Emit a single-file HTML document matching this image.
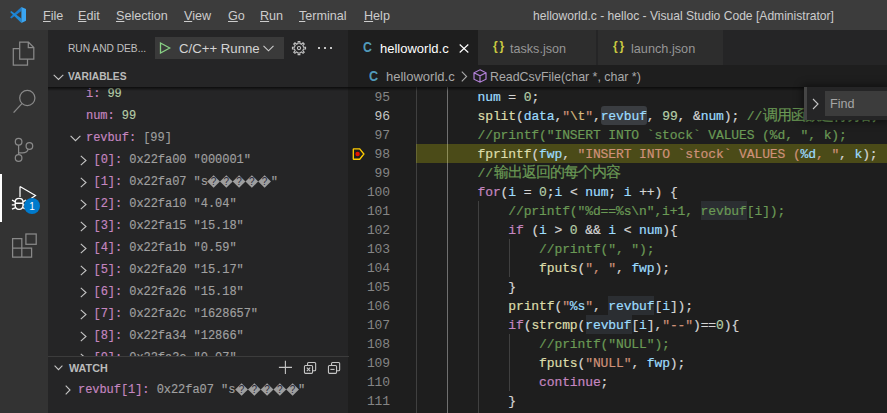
<!DOCTYPE html>
<html><head><meta charset="utf-8">
<style>
*{box-sizing:border-box}
html,body{margin:0;padding:0}
body{width:887px;height:413px;overflow:hidden;position:relative;background:#1e1e1e;font-family:"Liberation Sans",sans-serif;color:#ccc}
.a{position:absolute;white-space:pre}
#title{left:0;top:0;width:887px;height:30px;background:#3c3c3c}
#title .m{top:8px;font-size:12.6px;color:#cccccc;line-height:16px}
#title .m u{text-decoration:underline;text-underline-offset:1px}
#act{left:0;top:30px;width:48px;height:383px;background:#333333}
#side{left:48px;top:30px;width:300px;height:383px;background:#252526}
#tabs{left:349px;top:30px;width:538px;height:35px;background:#252526}
.tab{top:0;height:35px;background:#2d2d2d;font-size:13px;line-height:35px;color:#969696}
.mono{font-family:"Liberation Mono",monospace}
#code .l{position:absolute;left:67px;margin-top:1px;-webkit-text-stroke:0.2px currentColor;height:19px;line-height:19px;font-size:13px;letter-spacing:-0.11px;font-family:"Liberation Mono",monospace;color:#d4d4d4;white-space:pre}
.ln{position:absolute;width:41px;margin-top:1px;text-align:right;font-family:"Liberation Mono",monospace;font-size:13px;letter-spacing:-0.11px;color:#858585;height:19px;line-height:19px}
.v{color:#9cdcfe}.f{color:#dcdcaa}.s{color:#ce9178}.e{color:#d7ba7d}.c{color:#6a9955}.k{color:#c586c0}.n{color:#b5cea8}
.var{position:absolute;font-family:"Liberation Mono",monospace;font-size:12px;letter-spacing:-0.05px;line-height:22px;height:22px;white-space:pre;color:#a0a0a0;-webkit-text-stroke:0.15px currentColor}
.nm{color:#c586c0}
.cjk{font-size:14.5px;letter-spacing:-0.95px;margin-left:0.8px}.gv{color:#9d9d9d}
.chev{position:absolute}
</style></head><body>

<!-- TITLE BAR -->
<div id="title" class="a">
  <svg class="a" style="left:10px;top:7px" width="16" height="16" viewBox="0 0 16 16">
    <path d="M11.4 0 L11.4 4.1 L1.3 11.4 L0.1 10.3 Z" fill="#1b7ccc"/>
    <path d="M0.1 5 L1.3 3.9 L11.4 11.5 L11.4 15.9 Z" fill="#1f8ad8"/>
    <path d="M11.4 0 L16 2 L16 13.8 L11.4 15.9 Z" fill="#3aa5f2"/>
  </svg>
  <div class="a m" style="left:43px"><u>F</u>ile</div>
  <div class="a m" style="left:78px"><u>E</u>dit</div>
  <div class="a m" style="left:116px"><u>S</u>election</div>
  <div class="a m" style="left:184px"><u>V</u>iew</div>
  <div class="a m" style="left:228px"><u>G</u>o</div>
  <div class="a m" style="left:260px"><u>R</u>un</div>
  <div class="a m" style="left:299px"><u>T</u>erminal</div>
  <div class="a m" style="left:364px"><u>H</u>elp</div>
  <div class="a m" style="left:533px;font-size:12.1px">helloworld.c - helloc - Visual Studio Code [Administrator]</div>
</div>

<!-- ACTIVITY BAR -->
<div id="act" class="a">
  <svg class="a" style="left:0;top:0" width="48" height="383" viewBox="0 30 48 383" fill="none" stroke="#898989" stroke-width="1.25">
    <!-- files -->
    <path d="M19.7 42.2 H28.5 L33.8 47.5 V59.2 H19.7 Z M28.3 42.2 V47.6 H33.8"/>
    <path d="M19.6 48.5 H13.3 V65 H27.5 V59.3"/>
    <!-- search -->
    <circle cx="27.3" cy="98" r="7.6"/>
    <path d="M21.9 103.6 L13.6 112.6" stroke-width="1.3"/>
    <!-- scm -->
    <circle cx="18.6" cy="141.7" r="3.3"/>
    <circle cx="29.4" cy="146" r="3.3"/>
    <circle cx="18.6" cy="158" r="3.3"/>
    <path d="M18.6 145 V154.7 M28.2 149.2 Q27 152.8 22.5 152.8 H18.6"/>
    <!-- extensions -->
    <path d="M12.6 238.7 H21.8 V248 H31.6 V257.2 H12.6 Z M12.6 248 H21.8 V257.2"/>
    <rect x="25.9" y="234" width="10.3" height="10.3"/>
  </svg>
  <div class="a" style="left:0;top:144px;width:2px;height:48px;background:#ffffff"></div>
  <svg class="a" style="left:0;top:144px" width="48" height="48" viewBox="0 174 48 48" fill="none" stroke="#ffffff" stroke-width="1.2">
    <path d="M20 186.5 L35.5 195.5 L31 198.5 M20 186.5 V197"/>
    <path d="M15.2 202.2 Q15.2 198.4 19.1 198.4 Q23 198.4 23 202.2 V205.6 Q23 209.4 19.1 209.4 Q15.2 209.4 15.2 205.6 Z M15.2 203.2 H23 M12 200.2 L15 201.6 M26.2 200.2 L23.2 201.6 M11.8 204.8 H15 M26.4 204.8 H23.2 M12 209.2 L15 207.8 M26.2 209.2 L23.2 207.8" stroke-width="1.35"/>
  </svg>
  <div class="a" style="left:24px;top:167.5px;width:16px;height:16px;border-radius:8px;background:#007acc;color:#fff;font-size:10px;line-height:17px;text-align:center">1</div>
</div>

<!-- SIDEBAR -->
<div id="side" class="a">
  <div class="a" style="left:20px;top:12.5px;font-size:10.2px;line-height:12px;color:#c0c0c0">RUN AND DEB...</div>
  <div class="a" style="left:107px;top:7px;width:129px;height:22px;background:#3a3a3a"></div>
  <svg class="a" style="left:111px;top:12px" width="12" height="12" viewBox="0 0 12 12"><path d="M1.5 1 L10.8 6 L1.5 11 Z" fill="none" stroke="#89d185" stroke-width="1.3"/></svg>
  <div class="a" style="left:131px;top:11px;font-size:13.2px;line-height:16px;color:#d4d4d4">C/C++ Runne</div>
  <svg class="a" style="left:215px;top:15px" width="11" height="7" viewBox="0 0 11 7"><path d="M0.5 0.8 L5.5 5.8 L10.5 0.8" fill="none" stroke="#cccccc" stroke-width="1.1"/></svg>
  <!-- gear -->
  <svg class="a" style="left:243px;top:11px" width="16" height="15" viewBox="0 0 16 15" fill="none" stroke="#c5c5c5" stroke-width="1.1">
    <path d="M12.51 6.19 L14.54 6.24 L14.54 7.96 L12.51 8.01 L12.25 8.85 L11.83 9.64 L13.23 11.12 L12.02 12.33 L10.54 10.93 L9.77 11.35 L8.91 11.61 L8.86 13.64 L7.14 13.64 L7.09 11.61 L6.25 11.35 L5.46 10.93 L3.98 12.33 L2.77 11.12 L4.17 9.64 L3.75 8.87 L3.49 8.01 L1.46 7.96 L1.46 6.24 L3.49 6.19 L3.75 5.35 L4.17 4.56 L2.77 3.08 L3.98 1.87 L5.46 3.27 L6.23 2.85 L7.09 2.59 L7.14 0.56 L8.86 0.56 L8.91 2.59 L9.75 2.85 L10.54 3.27 L12.02 1.87 L13.23 3.08 L11.83 4.56 L12.25 5.33 Z"/>
    <circle cx="8" cy="7.1" r="1.6"/>
  </svg>
  <div class="a" style="left:270px;top:17px;width:2px;height:2px;background:#c5c5c5"></div>
  <div class="a" style="left:276px;top:17px;width:2px;height:2px;background:#c5c5c5"></div>
  <div class="a" style="left:282px;top:17px;width:2px;height:2px;background:#c5c5c5"></div>

  <!-- VARIABLES pane -->
  <div class="a" style="left:0;top:35px;width:301px;height:22px;background:#252526"></div>
  <svg class="a" style="left:4.5px;top:43.5px" width="12" height="7" viewBox="0 0 12 7"><path d="M0.7 0.8 L5.5 5.4 L10.3 0.8" fill="none" stroke="#c5c5c5" stroke-width="1.1"/></svg>
  <div class="a" style="left:20px;top:41px;font-size:10.25px;line-height:12px;font-weight:bold;color:#bbbbbb">VARIABLES</div>
</div>
<div class="a" style="left:48px;top:87px;width:300px;height:269px;overflow:hidden" id="vars">
  <div class="a" style="left:0;top:0;width:301px;height:4px;background:linear-gradient(#000000aa,#00000000);z-index:2"></div>
  <div class="var" style="left:38px;top:-4px"><span class="nm">i:</span> <span class="n">99</span></div>
  <div class="var" style="left:38px;top:18px"><span class="nm">num:</span> <span class="n">99</span></div>
  <div class="var" style="left:38px;top:40px"><span class="nm">revbuf:</span> <span class="gv">[99]</span></div>
  <svg class="a" style="left:22px;top:48px" width="11" height="7" viewBox="0 0 11 7"><path d="M0.6 0.8 L5.5 5.7 L10.4 0.8" fill="none" stroke="#c5c5c5" stroke-width="1.1"/></svg>

<svg class="a" style="left:32px;top:68px" width="7" height="11" viewBox="0 0 7 11"><path d="M0.8 0.8 L6 5.5 L0.8 10.2" fill="none" stroke="#c5c5c5" stroke-width="1.1"/></svg>
<div class="var" style="left:45.5px;top:62px"><span class="nm">[0]:</span> 0x22fa00 "000001"</div>
<svg class="a" style="left:32px;top:90px" width="7" height="11" viewBox="0 0 7 11"><path d="M0.8 0.8 L6 5.5 L0.8 10.2" fill="none" stroke="#c5c5c5" stroke-width="1.1"/></svg>
<div class="var" style="left:45.5px;top:84px"><span class="nm">[1]:</span> 0x22fa07 "s<svg width="64" height="13" viewBox="0 0 64 13" style="vertical-align:-3px;margin-left:-0.8px;margin-right:-0.5px"><path d="M0.20 6.5 L6.60 0.2 L12.95 6.5 L6.60 12.8 Z" fill="#9e9e9e"/><text x="6.60" y="10.3" text-anchor="middle" font-family="Liberation Sans" font-size="10" fill="#2a2a3a">?</text><path d="M12.95 6.5 L19.35 0.2 L25.70 6.5 L19.35 12.8 Z" fill="#9e9e9e"/><text x="19.35" y="10.3" text-anchor="middle" font-family="Liberation Sans" font-size="10" fill="#2a2a3a">?</text><path d="M25.70 6.5 L32.10 0.2 L38.45 6.5 L32.10 12.8 Z" fill="#9e9e9e"/><text x="32.10" y="10.3" text-anchor="middle" font-family="Liberation Sans" font-size="10" fill="#2a2a3a">?</text><path d="M38.45 6.5 L44.85 0.2 L51.20 6.5 L44.85 12.8 Z" fill="#9e9e9e"/><text x="44.85" y="10.3" text-anchor="middle" font-family="Liberation Sans" font-size="10" fill="#2a2a3a">?</text><path d="M51.20 6.5 L57.60 0.2 L63.95 6.5 L57.60 12.8 Z" fill="#9e9e9e"/><text x="57.60" y="10.3" text-anchor="middle" font-family="Liberation Sans" font-size="10" fill="#2a2a3a">?</text></svg>"</div>
<svg class="a" style="left:32px;top:112px" width="7" height="11" viewBox="0 0 7 11"><path d="M0.8 0.8 L6 5.5 L0.8 10.2" fill="none" stroke="#c5c5c5" stroke-width="1.1"/></svg>
<div class="var" style="left:45.5px;top:106px"><span class="nm">[2]:</span> 0x22fa10 "4.04"</div>
<svg class="a" style="left:32px;top:134px" width="7" height="11" viewBox="0 0 7 11"><path d="M0.8 0.8 L6 5.5 L0.8 10.2" fill="none" stroke="#c5c5c5" stroke-width="1.1"/></svg>
<div class="var" style="left:45.5px;top:128px"><span class="nm">[3]:</span> 0x22fa15 "15.18"</div>
<svg class="a" style="left:32px;top:156px" width="7" height="11" viewBox="0 0 7 11"><path d="M0.8 0.8 L6 5.5 L0.8 10.2" fill="none" stroke="#c5c5c5" stroke-width="1.1"/></svg>
<div class="var" style="left:45.5px;top:150px"><span class="nm">[4]:</span> 0x22fa1b "0.59"</div>
<svg class="a" style="left:32px;top:178px" width="7" height="11" viewBox="0 0 7 11"><path d="M0.8 0.8 L6 5.5 L0.8 10.2" fill="none" stroke="#c5c5c5" stroke-width="1.1"/></svg>
<div class="var" style="left:45.5px;top:172px"><span class="nm">[5]:</span> 0x22fa20 "15.17"</div>
<svg class="a" style="left:32px;top:200px" width="7" height="11" viewBox="0 0 7 11"><path d="M0.8 0.8 L6 5.5 L0.8 10.2" fill="none" stroke="#c5c5c5" stroke-width="1.1"/></svg>
<div class="var" style="left:45.5px;top:194px"><span class="nm">[6]:</span> 0x22fa26 "15.18"</div>
<svg class="a" style="left:32px;top:222px" width="7" height="11" viewBox="0 0 7 11"><path d="M0.8 0.8 L6 5.5 L0.8 10.2" fill="none" stroke="#c5c5c5" stroke-width="1.1"/></svg>
<div class="var" style="left:45.5px;top:216px"><span class="nm">[7]:</span> 0x22fa2c "1628657"</div>
<svg class="a" style="left:32px;top:244px" width="7" height="11" viewBox="0 0 7 11"><path d="M0.8 0.8 L6 5.5 L0.8 10.2" fill="none" stroke="#c5c5c5" stroke-width="1.1"/></svg>
<div class="var" style="left:45.5px;top:238px"><span class="nm">[8]:</span> 0x22fa34 "12866"</div>
<svg class="a" style="left:32px;top:266px" width="7" height="11" viewBox="0 0 7 11"><path d="M0.8 0.8 L6 5.5 L0.8 10.2" fill="none" stroke="#c5c5c5" stroke-width="1.1"/></svg>
<div class="var" style="left:45.5px;top:260px"><span class="nm">[9]:</span> 0x22fa3c "0.07"</div>
</div>

<div class="a" style="left:348px;top:30px;width:1px;height:383px;background:#1e1e1e"></div>
<!-- TABS -->
<div id="tabs" class="a">
  <div class="a tab" style="left:0;width:129px;background:#1e1e1e;color:#ffffff">
    <div class="a" style="left:14.2px;top:-0.3px;font-weight:bold;color:#519aba;font-size:14px;transform:scaleX(0.88);transform-origin:left">C</div>
    <div class="a" style="left:31px;top:0.5px">helloworld.c</div>
    <svg class="a" style="left:110px;top:14px" width="10" height="9" viewBox="0 0 10 9"><path d="M0.7 0.5 L9.3 8.5 M9.3 0.5 L0.7 8.5" stroke="#ffffff" stroke-width="1.1"/></svg>
  </div>
  <div class="a tab" style="left:129px;width:119px;border-right:1px solid #252526">
    <div class="a" style="left:15px;top:-1px;color:#cbcb41;font-size:12px;font-weight:bold;letter-spacing:1.8px">{}</div>
    <div class="a" style="left:32px;top:2px;font-size:12.6px">tasks.json</div>
  </div>
  <div class="a tab" style="left:249px;width:125px">
    <div class="a" style="left:15px;top:-1px;color:#cbcb41;font-size:12px;font-weight:bold;letter-spacing:1.8px">{}</div>
    <div class="a" style="left:33px;top:2px;font-size:12.7px">launch.json</div>
  </div>
</div>

<!-- BREADCRUMBS -->
<div class="a" style="left:349px;top:65px;width:538px;height:22px;background:#1e1e1e">
  <div class="a" style="left:20.3px;top:3.2px;font-weight:bold;color:#519aba;font-size:14px;line-height:16px;transform:scaleX(0.9);transform-origin:left">C</div>
  <div class="a" style="left:37px;top:4px;font-size:13px;line-height:16px;color:#a9a9a9">helloworld.c</div>
  <svg class="a" style="left:112px;top:5.5px" width="7" height="11" viewBox="0 0 7 11"><path d="M0.8 0.6 L5.6 5.5 L0.8 10.4" fill="none" stroke="#a9a9a9" stroke-width="1.1"/></svg>
  <svg class="a" style="left:124px;top:4px" width="14" height="14" viewBox="0 0 14 14" fill="none" stroke="#b180d7" stroke-width="1.2">
    <path d="M7 0.8 L13 3.8 V10.2 L7 13.2 L1 10.2 V3.8 Z M1 3.8 L7 6.8 L13 3.8 M7 6.8 V13.2"/>
  </svg>
  <div class="a" style="left:141px;top:4px;font-size:12.4px;line-height:16px;color:#a9a9a9">ReadCsvFile(char *, char *)</div>
</div>

<!-- EDITOR -->
<div id="code" class="a" style="left:349px;top:87px;width:538px;height:326px;overflow:hidden">
  <div class="a" style="left:252px;top:19px;width:46px;height:19px;background:#3a3d41;border-radius:3px"></div>
  <div class="a" style="left:352px;top:114px;width:46px;height:19px;background:#2b2e32"></div>
  <div class="a" style="left:259px;top:209px;width:46px;height:19px;background:#2b2e32"></div>
  <div class="a" style="left:236.5px;top:228px;width:46px;height:19px;background:#2b2e32"></div>
  <div class="a" style="left:67px;top:0;width:1px;height:326px;background:#404040"></div>
  <div class="a" style="left:98px;top:0;width:1px;height:326px;background:#707070"></div>
  <div class="a" style="left:129px;top:114px;width:1px;height:212px;background:#404040"></div>
  <div class="a" style="left:160px;top:152px;width:1px;height:38px;background:#404040"></div>
  <div class="a" style="left:160px;top:247px;width:1px;height:57px;background:#404040"></div>
  <div class="a" style="left:67px;top:57px;width:471px;height:19px;background:rgba(255,255,0,0.2)"></div>
  <svg class="a" style="left:3px;top:60.5px" width="13" height="13" viewBox="0 0 13 13">
    <path d="M1.3 1.3 Q1.3 0.8 1.8 0.8 H7.7 L11.9 6 L7.7 11.2 H1.8 Q1.3 11.2 1.3 10.7 Z" fill="none" stroke="#ffcc00" stroke-width="1.35"/>
    <circle cx="5.6" cy="6" r="2.2" fill="#e51400"/>
  </svg>
<div class="ln" style="left:0px;top:0px;">95</div>
<div class="l" style="top:0px">        <span class="v">num</span> = <span class="n">0</span>;</div>
<div class="ln" style="left:0px;top:19px;color:#c6c6c6">96</div>
<div class="l" style="top:19px">        <span class="f">split</span>(<span class="v">data</span>,<span class="s">&quot;</span><span class="e">\t</span><span class="s">&quot;</span>,<span class="v hl1">revbuf</span>, <span class="n">99</span>, &amp;<span class="v">num</span>); <span class="c">//<span class="cjk">调用函数进行分割</span></span></div>
<div class="ln" style="left:0px;top:38px;">97</div>
<div class="l" style="top:38px">        <span class="c">//printf(&quot;INSERT INTO `stock` VALUES (%d, &quot;, k);</span></div>
<div class="ln" style="left:0px;top:57px;">98</div>
<div class="l" style="top:57px">        <span class="f">fprintf</span>(<span class="v">fwp</span>, <span class="s">&quot;INSERT INTO `stock` VALUES (</span><span class="v">%d</span><span class="s">, &quot;</span>, <span class="v">k</span>);</div>
<div class="ln" style="left:0px;top:76px;">99</div>
<div class="l" style="top:76px">        <span class="c">//<span class="cjk">输出返回的每个内容</span></span></div>
<div class="ln" style="left:0px;top:95px;">100</div>
<div class="l" style="top:95px">        <span class="k">for</span>(<span class="v">i</span> = <span class="n">0</span>;<span class="v">i</span> &lt; <span class="v">num</span>; <span class="v">i</span> ++) {</div>
<div class="ln" style="left:0px;top:114px;">101</div>
<div class="l" style="top:114px">            <span class="c">//printf(&quot;%d==%s\n&quot;,i+1, </span><span class="c hl2">revbuf</span><span class="c">[i]);</span></div>
<div class="ln" style="left:0px;top:133px;">102</div>
<div class="l" style="top:133px">            <span class="k">if</span> (<span class="v">i</span> &gt; <span class="n">0</span> &amp;&amp; <span class="v">i</span> &lt; <span class="v">num</span>){</div>
<div class="ln" style="left:0px;top:152px;">103</div>
<div class="l" style="top:152px">                <span class="c">//printf(&quot;, &quot;);</span></div>
<div class="ln" style="left:0px;top:171px;">104</div>
<div class="l" style="top:171px">                <span class="f">fputs</span>(<span class="s">&quot;, &quot;</span>, <span class="v">fwp</span>);</div>
<div class="ln" style="left:0px;top:190px;">105</div>
<div class="l" style="top:190px">            }</div>
<div class="ln" style="left:0px;top:209px;">106</div>
<div class="l" style="top:209px">            <span class="f">printf</span>(<span class="s">&quot;</span><span class="v">%s</span><span class="s">&quot;</span>, <span class="v hl2">revbuf</span>[<span class="v">i</span>]);</div>
<div class="ln" style="left:0px;top:228px;">107</div>
<div class="l" style="top:228px">            <span class="k">if</span>(<span class="f">strcmp</span>(<span class="v hl2">revbuf</span>[<span class="v">i</span>],<span class="s">&quot;--&quot;</span>)==<span class="n">0</span>){</div>
<div class="ln" style="left:0px;top:247px;">108</div>
<div class="l" style="top:247px">                <span class="c">//printf(&quot;NULL&quot;);</span></div>
<div class="ln" style="left:0px;top:266px;">109</div>
<div class="l" style="top:266px">                <span class="f">fputs</span>(<span class="s">&quot;NULL&quot;</span>, <span class="v">fwp</span>);</div>
<div class="ln" style="left:0px;top:285px;">110</div>
<div class="l" style="top:285px">                <span class="k">continue</span>;</div>
<div class="ln" style="left:0px;top:304px;">111</div>
<div class="l" style="top:304px">            }</div>
</div>

<!-- WATCH -->
<div class="a" style="left:48px;top:356px;width:300px;height:57px;background:#252526">
  <div class="a" style="left:0;top:0;width:301px;height:1px;background:#3c3c3c"></div>
  <svg class="a" style="left:6px;top:9px" width="9" height="6" viewBox="0 0 9 6"><path d="M0.6 0.7 L4.5 4.6 L8.4 0.7" fill="none" stroke="#c5c5c5" stroke-width="1.1"/></svg>
  <div class="a" style="left:21px;top:5.8px;font-size:10.8px;line-height:12px;font-weight:bold;color:#bbbbbb">WATCH</div>
  <svg class="a" style="left:230px;top:4px" width="16" height="16" viewBox="0 0 16 16"><path d="M7.4 0.8 V13.9 M0.9 7.35 H14" stroke="#c5c5c5" stroke-width="1.1"/></svg>
  <svg class="a" style="left:255px;top:5px" width="14" height="14" viewBox="0 0 14 14" fill="none" stroke="#c5c5c5" stroke-width="1.1">
    <path d="M4.55 4.2 V2.4 Q4.55 1.45 5.5 1.45 H11.7 Q12.65 1.45 12.65 2.4 V8.8 Q12.65 9.75 11.7 9.75 H9.8"/>
    <rect x="1.45" y="4.45" width="8.1" height="7.9" rx="1"/>
    <path d="M3.8 6.6 L7.2 10.2 M7.2 6.6 L3.8 10.2"/>
  </svg>
  <svg class="a" style="left:279px;top:5px" width="14" height="14" viewBox="0 0 14 14" fill="none" stroke="#c5c5c5" stroke-width="1.1">
    <path d="M4.55 4.2 V2.4 Q4.55 1.45 5.5 1.45 H11.7 Q12.65 1.45 12.65 2.4 V8.8 Q12.65 9.75 11.7 9.75 H9.8"/>
    <rect x="1.45" y="4.45" width="8.1" height="7.9" rx="1"/>
    <path d="M3.4 8.4 H7.6"/>
  </svg>
  <svg class="a" style="left:17px;top:28.5px" width="6" height="10" viewBox="0 0 6 10"><path d="M0.7 0.7 L5 5 L0.7 9.3" fill="none" stroke="#c5c5c5" stroke-width="1.1"/></svg>
  <div class="var" style="left:30px;top:22.5px"><span class="nm">revbuf[1]:</span> 0x22fa07 "s<svg width="64" height="13" viewBox="0 0 64 13" style="vertical-align:-3px;margin-left:-0.8px;margin-right:-0.5px"><path d="M0.20 6.5 L6.60 0.2 L12.95 6.5 L6.60 12.8 Z" fill="#9e9e9e"/><text x="6.60" y="10.3" text-anchor="middle" font-family="Liberation Sans" font-size="10" fill="#2a2a3a">?</text><path d="M12.95 6.5 L19.35 0.2 L25.70 6.5 L19.35 12.8 Z" fill="#9e9e9e"/><text x="19.35" y="10.3" text-anchor="middle" font-family="Liberation Sans" font-size="10" fill="#2a2a3a">?</text><path d="M25.70 6.5 L32.10 0.2 L38.45 6.5 L32.10 12.8 Z" fill="#9e9e9e"/><text x="32.10" y="10.3" text-anchor="middle" font-family="Liberation Sans" font-size="10" fill="#2a2a3a">?</text><path d="M38.45 6.5 L44.85 0.2 L51.20 6.5 L44.85 12.8 Z" fill="#9e9e9e"/><text x="44.85" y="10.3" text-anchor="middle" font-family="Liberation Sans" font-size="10" fill="#2a2a3a">?</text><path d="M51.20 6.5 L57.60 0.2 L63.95 6.5 L57.60 12.8 Z" fill="#9e9e9e"/><text x="57.60" y="10.3" text-anchor="middle" font-family="Liberation Sans" font-size="10" fill="#2a2a3a">?</text></svg>"</div>
</div>

<div class="a" style="left:348px;top:87px;width:539px;height:4px;background:linear-gradient(rgba(0,0,0,0.6),rgba(0,0,0,0))"></div>
<!-- FIND WIDGET -->
<div class="a" style="left:804px;top:87px;width:83px;height:33px;background:#252526;box-shadow:0 0 8px 2px rgba(0,0,0,0.45)">
  <div class="a" style="left:0;top:0;width:3px;height:33px;background:#454545"></div>
  <svg class="a" style="left:8px;top:11px" width="8" height="12" viewBox="0 0 8 12"><path d="M1 1 L6 6 L1 11" fill="none" stroke="#c5c5c5" stroke-width="1.1"/></svg>
  <div class="a" style="left:21px;top:4px;width:62px;height:25px;background:#3c3c3c"></div>
  <div class="a" style="left:26px;top:9px;font-size:12.6px;line-height:16px;color:#a6a6a6">Find</div>
</div>

</body></html>
